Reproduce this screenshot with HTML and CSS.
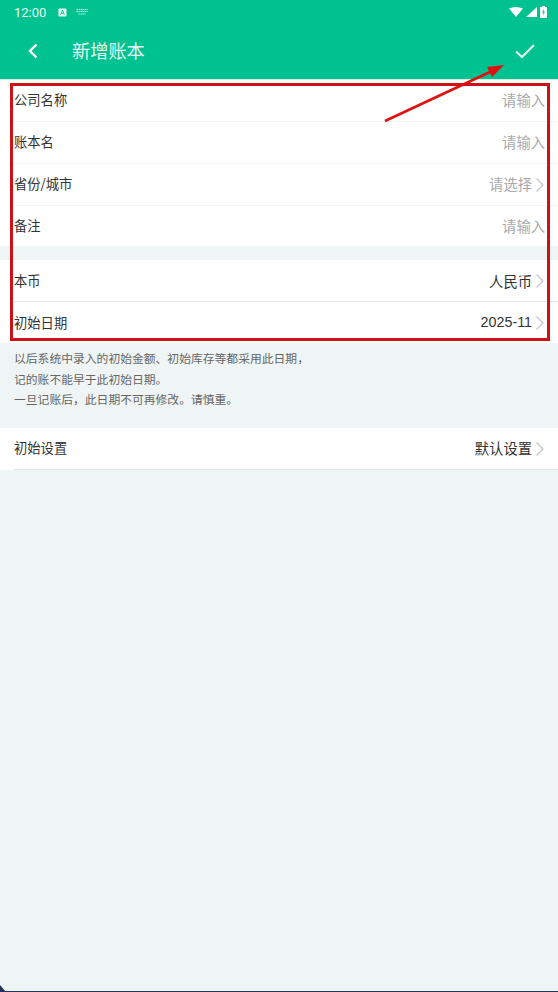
FILE: index.html
```html
<!DOCTYPE html>
<html lang="zh">
<head>
<meta charset="utf-8">
<title>新增账本</title>
<link rel="stylesheet" href="styles.css">
</head>
<body>
<div class="screen">
  <div class="top">
    <div class="status">
      <span class="time">12:00</span>
      <svg class="st-a" width="9" height="9" viewBox="0 0 10 10"><rect x="0.5" y="0.5" width="9" height="9" rx="1.5" fill="#e6f7f2"/><path d="M3 7.5 5 2.5 7 7.5M3.8 6h2.4" fill="none" stroke="#00c291" stroke-width="1"/></svg>
      <svg class="st-k" width="12" height="8" viewBox="0 0 12 8"><path d="M0.5 1.5h11M0.5 3.5h11M2.5 6h7" fill="none" stroke="#d5f3ea" stroke-width="1" stroke-dasharray="1.4 .6"/></svg>
      <span class="st-right">
        <svg width="14" height="10" viewBox="0 0 14 10"><path d="M0 1.5Q7-1.5 14 1.5L7 10Z" fill="#fff"/></svg>
        <svg width="11" height="10" viewBox="0 0 11 10"><path d="M11 0V10H0Z" fill="#fff"/></svg>
        <svg width="7" height="12" viewBox="0 0 7 12"><path d="M2 0H5V1H7V12H0V1H2Z" fill="#fff"/><path d="M4 3 2 6.5H3.3L3 9.5 5 5.8H3.7Z" fill="#00c291"/></svg>
      </span>
    </div>
    <div class="bar">
      <svg class="back" width="12" height="18" viewBox="0 0 12 18"><path d="M9.5 2.5 3 9l6.5 6.5" fill="none" stroke="#fff" stroke-width="2.4"/></svg>
      <span class="title">新增账本</span>
      <svg class="ok" width="22" height="16" viewBox="0 0 22 16"><path d="M2 8.5 8 14 20 2" fill="none" stroke="#e6f7f2" stroke-width="2"/></svg>
    </div>
  </div>

  <div class="group first">
    <div class="row"><span class="label">公司名称</span><span class="hint">请输入</span></div>
    <div class="row"><span class="label">账本名</span><span class="hint">请输入</span></div>
    <div class="row"><span class="label">省份/城市</span><span class="hint">请选择</span><svg class="more" width="10" height="16" viewBox="0 0 10 16"><path d="M1.5 1.5 8 8l-6.500 6.500" fill="none" stroke="#c4c4c4" stroke-width="1.200"/></svg></div>
    <div class="row"><span class="label">备注</span><span class="hint">请输入</span></div>
  </div>

  <div class="group second">
    <div class="row line"><span class="label">本币</span><span class="val">人民币</span><svg class="more" width="10" height="16" viewBox="0 0 10 16"><path d="M1.5 1.5 8 8l-6.500 6.500" fill="none" stroke="#c4c4c4" stroke-width="1.200"/></svg></div>
    <div class="row"><span class="label">初始日期</span><span class="val">2025-11</span><svg class="more" width="10" height="16" viewBox="0 0 10 16"><path d="M1.5 1.5 8 8l-6.500 6.500" fill="none" stroke="#c4c4c4" stroke-width="1.200"/></svg></div>
  </div>

  <div class="note">
    <p>以后系统中录入的初始金额、初始库存等都采用此日期，</p>
    <p>记的账不能早于此初始日期。</p>
    <p>一旦记账后，此日期不可再修改。请慎重。</p>
  </div>

  <div class="group third">
    <div class="row line"><span class="label">初始设置</span><span class="val">默认设置</span><svg class="more" width="10" height="16" viewBox="0 0 10 16"><path d="M1.5 1.5 8 8l-6.500 6.500" fill="none" stroke="#c4c4c4" stroke-width="1.200"/></svg></div>
  </div>

  <div class="redbox"></div>
  <svg class="arrow" width="130" height="62" viewBox="0 0 130 62"><path d="M1 59 106 10" fill="none" stroke="#e01010" stroke-width="2.600"/><path d="M120 3 103 5 108 15Z" fill="#e01010"/></svg>
  <div class="corner"></div>
  <div class="edge"></div>
</div>
</body>
</html>
```

FILE: styles.css
```css
html, body { margin: 0; padding: 0; }
body { font-family: "Noto Sans CJK SC", "Liberation Sans", sans-serif; color: #333; }

.screen { position: relative; width: 558px; height: 992px; overflow: hidden; background: #eff4f4; }

.top { height: 79px; background: #00c291; border-bottom: 1px solid #d8e8e2; }
.status { display: flex; align-items: center; height: 24px; padding: 0 11px 0 14px; color: #e6f7f2; font-family: Roboto, sans-serif; font-size: 13px; }
.st-a { margin-left: 12px; }
.st-k { margin-left: 9px; }
.st-right { display: flex; align-items: center; gap: 3px; margin-left: auto; }
.bar { display: flex; align-items: center; height: 54px; padding: 0 22px 0 27px; color: #e6f7f2; }
.back { flex: none; }
.title { margin-left: 33px; margin-bottom: 3px; font-size: 18.200px; }
.ok { margin-left: auto; }

.group { background: #fff; }
.second { margin-top: 14px; }

.row { display: flex; align-items: center; height: 41px; margin-left: 14px; padding-right: 13px; border-bottom: 1px solid #f3f5f5; font-size: 13.300px; }
.row.line { border-bottom-color: #e4e8e8; }
.first .row:last-child { height: 40px; border-bottom: 0; }
.first .row:last-child .label { margin-bottom: 1px; }
.first .row:last-child .hint { margin-bottom: 2px; }
.second .row:last-child { border-bottom: 0; }
.label { margin-bottom: 2px; }
.second .label { margin-bottom: 0; }
.third .label { margin-bottom: 2px; }
.hint, .val { margin-left: auto; font-size: 14.300px; font-family: "Liberation Sans", "Noto Sans CJK SC", sans-serif; }
.hint { margin-bottom: 3px; color: #aaa; }
.val { color: #333; }
.second .val { margin-bottom: 1px; }
.third .val { margin-bottom: 2px; }
.more { margin-left: 3px; }

.note { height: 85px; padding: 5px 14px 0; box-sizing: border-box; font-size: 11.800px; color: #666; }
.note p { margin: 0; line-height: 20.500px; }

.redbox { position: absolute; left: 10px; top: 83px; width: 534px; height: 252px; border: 3px solid #cc1218; }
.arrow { position: absolute; left: 384px; top: 62px; }
.edge { position: absolute; left: 0; right: 0; bottom: 0; height: 1px; background: #26335c; }
.corner { position: absolute; left: 0; bottom: 0; width: 6px; height: 7px; background: #26335c; clip-path: polygon(0 0, 100% 100%, 0 100%); }
```
